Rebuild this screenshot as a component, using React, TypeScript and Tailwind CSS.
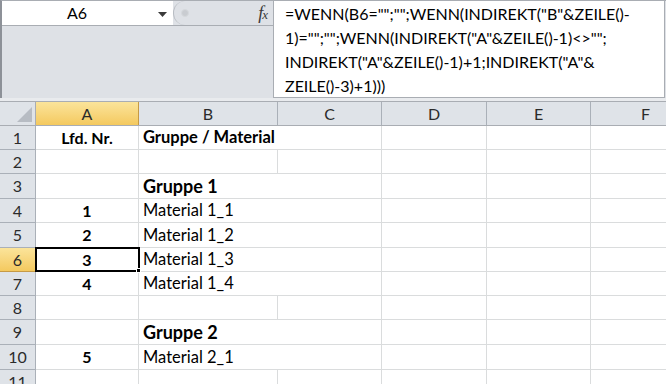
import React from "react";

const cols = [
  { key: "A", w: 103 },
  { key: "B", w: 139 },
  { key: "C", w: 104 },
  { key: "D", w: 105 },
  { key: "E", w: 104 },
  { key: "F", w: 110 },
];

const rowHeights = [24, 24, 25, 24, 25, 24, 24, 24, 25, 25, 24];

type Cell = { a?: string; b?: string; bBold?: boolean; bBig?: boolean };
const data: Cell[] = [
  { a: "Lfd. Nr.", b: "Gruppe / Material", bBold: true },
  {},
  { b: "Gruppe 1", bBold: true, bBig: true },
  { a: "1", b: "Material 1_1" },
  { a: "2", b: "Material 1_2" },
  { a: "3", b: "Material 1_3" },
  { a: "4", b: "Material 1_4" },
  {},
  { b: "Gruppe 2", bBold: true, bBig: true },
  { a: "5", b: "Material 2_1" },
  {},
];

export default function App() {
  return (
    <div className="w-[666px] h-[384px] overflow-hidden bg-white font-['Lato',sans-serif] text-black">
      {/* Formula bar */}
      <div className="flex h-[98px] border-t border-[#a9adb3] border-l-2 border-l-[#8d9198] bg-[#dee1e6]">
        <div className="w-[271px] flex flex-col">
          <div className="h-[25px] flex border-b border-[#a9adb3]">
            <div className="w-[171px] bg-white flex items-center relative">
              <span className="w-[150px] text-center text-[16px] leading-none">A6</span>
              <svg className="absolute left-[156px] top-[11px]" width="9" height="5" viewBox="0 0 9 5">
                <path d="M0 0h9L4.5 5z" fill="#3a3a3a" />
              </svg>
            </div>
            <div className="flex-1 flex items-center rounded-l-[14px] border-l border-[#b8bcc2] bg-[#dee1e6] relative">
              <div className="ml-[7px] w-[8px] h-[8px] rounded-full bg-[#c9ccd1] border border-[#d6d9dd]" />
              <span className="ml-auto mr-[6px] font-['Liberation_Serif',serif] italic text-[18px] leading-none text-[#3a3a3a] tracking-[-1px]">
                f<span className="text-[13px]">x</span>
              </span>
            </div>
          </div>
          <div className="flex-1" />
        </div>
        <div className="w-[392px] bg-white border-l border-r border-b border-[#a9adb3] pl-[11px] pt-[1px] text-[16px] leading-[24px] whitespace-nowrap">
          <div>=WENN(B6="";"";WENN(INDIREKT("B"&amp;ZEILE()-</div>
          <div>1)="";"";WENN(INDIREKT("A"&amp;ZEILE()-1)&lt;&gt;"";</div>
          <div>INDIREKT("A"&amp;ZEILE()-1)+1;INDIREKT("A"&amp;</div>
          <div>ZEILE()-3)+1)))</div>
        </div>
      </div>
      <div className="h-[3px] bg-[#e9ebee]" />
      <div className="h-[1px] bg-[#a9adb3]" />

      {/* Column headers */}
      <div className="flex h-[24px] bg-[#dfe3e8] border-b border-[#a9adb3]">
        <div className="w-[36px] shrink-0 border-r border-[#a9adb3] relative">
          <svg className="absolute right-[3px] bottom-[3px]" width="15" height="15" viewBox="0 0 15 15">
            <path d="M15 0V15H0z" fill="#b7bcc3" />
          </svg>
        </div>
        {cols.map((c) => (
          <div
            key={c.key}
            style={{ width: c.w }}
            className={
              c.key === "A"
                ? "shrink-0 flex items-center justify-center text-[16px] text-[#2b2b2b] border-r border-[#c69a45] bg-gradient-to-b from-[#fbe49a] to-[#f4c95e]"
                : "shrink-0 flex items-center justify-center text-[16px] text-[#2b2b2b] border-r border-[#aab0b8]"
            }
          >
            {c.key}
          </div>
        ))}
      </div>

      {/* Rows */}
      <div className="relative">
        {data.map((r, i) => {
          const n = i + 1;
          const sel = n === 6;
          return (
            <div key={n} className="flex" style={{ height: rowHeights[i] }}>
              <div
                className={
                  sel
                    ? "w-[36px] shrink-0 flex items-center justify-center text-[16px] text-[#2b2b2b] bg-gradient-to-b from-[#fbe49a] to-[#f4c95e] border-r border-b border-[#c69a45]"
                    : "w-[36px] shrink-0 flex items-center justify-center text-[16px] text-[#2b2b2b] bg-[#dfe3e8] border-r border-b border-[#aab0b8]"
                }
              >
                {n}
              </div>
              <div className="w-[103px] shrink-0 flex items-center justify-center font-bold text-[16px] border-r border-b border-[#dadcdd]">
                {r.a}
              </div>
              <div
                className={
                  "w-[139px] shrink-0 flex items-center pl-[4px] whitespace-nowrap border-b border-[#dadcdd] " +
                  (r.b ? "" : "border-r ") +
                  (r.bBig ? "font-bold text-[18px]" : r.bBold ? "font-bold text-[16.5px]" : "text-[16.5px]")
                }
              >
                {r.b}
              </div>
              <div className="w-[104px] shrink-0 border-r border-b border-[#dadcdd]" />
              <div className="w-[105px] shrink-0 border-r border-b border-[#dadcdd]" />
              <div className="w-[104px] shrink-0 border-r border-b border-[#dadcdd]" />
              <div className="w-[110px] shrink-0 border-r border-b border-[#dadcdd]" />
            </div>
          );
        })}
        {/* selection box */}
        <div className="absolute left-[35px] top-[121px] w-[105px] h-[25px] border-2 border-black pointer-events-none" />
        <div className="absolute left-[136px] top-[142px] w-[5px] h-[5px] bg-black border border-white pointer-events-none" />
      </div>
    </div>
  );
}
